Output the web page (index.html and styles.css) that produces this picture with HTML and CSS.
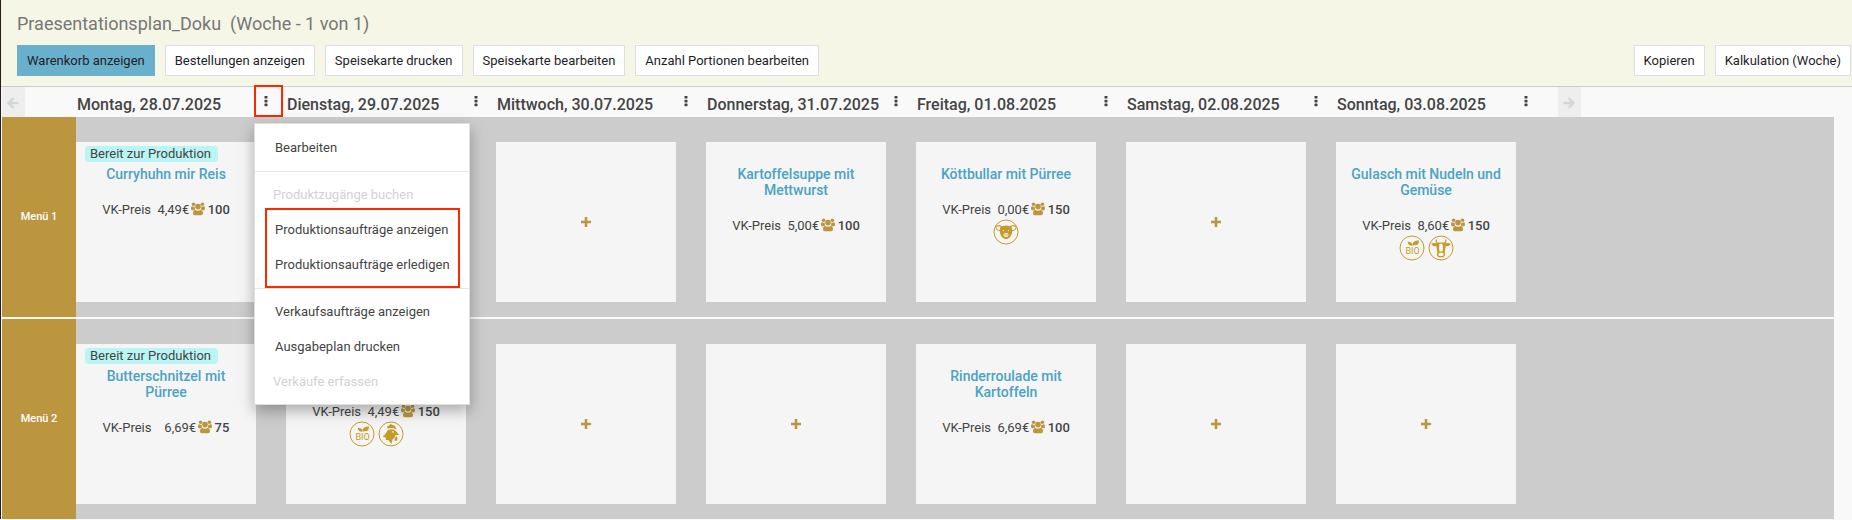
FILE: index.html
```
<!DOCTYPE html>
<html lang="de">
<head>
    <meta charset="UTF-8">
    <meta name="viewport" content="width=device-width, initial-scale=1.0">
    <title>Praesentationsplan</title>
    <link rel="stylesheet" href="styles.css">
</head>
<body>
    <svg class="sprite" aria-hidden="true">
        <symbol id="dots" viewBox="0 0 4 12">
            <rect x="0.5" y="1" width="3" height="2.6" rx="0.6"/>
            <rect x="0.5" y="4.8" width="3" height="2.6" rx="0.6"/>
            <rect x="0.5" y="8.6" width="3" height="2.6" rx="0.6"/>
        </symbol>
        <symbol id="plus" viewBox="0 0 10 10">
            <path d="M3.7 0h2.600v3.700H10v2.600H6.300V10H3.700V6.300H0V3.700h3.700z"/>
        </symbol>
        <symbol id="arrow-left" viewBox="0 0 12 12">
            <path d="M6.500 1 1.500 6l5 5M1.800 6H11.500" fill="none" stroke="currentColor" stroke-width="2.400"/>
        </symbol>
        <symbol id="arrow-right" viewBox="0 0 12 12">
            <path d="M5.500 1 10.500 6l-5 5M10.200 6H.5" fill="none" stroke="currentColor" stroke-width="2.400"/>
        </symbol>
        <symbol id="users" viewBox="0 0 14 14">
            <circle cx="2.6" cy="2.2" r="1.8"/>
            <circle cx="11.4" cy="2.2" r="1.8"/>
            <circle cx="7" cy="4.6" r="2.8"/>
            <path d="M0 6.2C0 4.6.6 4.2 1.4 4.2c1 .6 1.6.6 2.3.3 0 1.400.2 2.200.7 2.900C3.500 7.500 2.900 7.800 2.500 8.200H1.400C.5 8.200 0 7.600 0 6.200z"/>
            <path d="M14 6.200C14 4.600 13.400 4.200 12.600 4.200c-1 .6-1.600.6-2.300.3 0 1.400-.2 2.200-.7 2.900.9.1 1.500.4 1.900.8h1.100C13.500 8.200 14 7.600 14 6.200z"/>
            <path d="M2 11.300C2 9.300 2.800 7.900 4.300 7.900c1.600 1.100 3.800 1.100 5.400 0 1.500 0 2.300 1.400 2.300 3.400 0 1.200-.7 1.900-1.900 1.900H3.900C2.700 13.200 2 12.500 2 11.300z"/>
        </symbol>
        <symbol id="bio" viewBox="0 0 26 26">
            <circle cx="13" cy="13" r="12" fill="none" stroke="currentColor"/>
            <text class="bio-text" x="13.500" y="19" text-anchor="middle">BIO</text>
            <path d="M13.500 10.600C13 7.500 15.500 5.300 20 5.400c.1 3.700-2.200 5.700-5.200 4.700l-.8.900z"/>
            <path d="M13 10.600C10.800 10.800 9 9.500 8.600 6.700c2.800-.2 4.500 1 4.700 3.200z"/>
        </symbol>
        <symbol id="cow" viewBox="0 0 26 26">
            <circle cx="13" cy="13" r="12" fill="none" stroke="currentColor"/>
            <path d="M8.600 4.400C7.500 6.600 8.200 7.800 10 8.100h6c1.800-.3 2.500-1.500 1.400-3.700" fill="none" stroke="currentColor" stroke-width="1.200"/>
            <path d="M3.300 8.600C5 7.600 7.300 7.700 9 8.600L8.500 11C6 11.700 4 10.800 3.300 8.600z"/>
            <path d="M22.700 8.600C21 7.600 18.700 7.700 17 8.600l.5 2.400c2.500.7 4.500-.2 5.200-2.400z"/>
            <path d="M8.300 8h3.200l-.5 5.500.6 3.800-2.200 1.500C9.600 15.500 7.800 12.500 8.300 8z"/>
            <path d="M17.700 8h-3.200l.5 5.500-.6 3.800 2.200 1.500c-.2-3.300 1.600-6.300 1.100-10.800z"/>
            <path d="M10.400 17.200h5.200l.9 2.400-1.300 2h-4.400l-1.300-2z" fill="none" stroke="currentColor" stroke-width="1.300"/>
        </symbol>
        <symbol id="pig" viewBox="0 0 26 26">
            <circle cx="13" cy="13" r="12" fill="none" stroke="currentColor"/>
            <path d="M7.300 8.500C9.500 5.800 16.500 5.800 18.700 8.500c.8 2.200.7 5-.3 7.200-1.400 2.900-3 4.300-5.400 4.300s-4-1.400-5.400-4.300c-1-2.200-1.100-5-.3-7.200z"/>
            <path d="M8.600 7.500C6.300 6.300 4 6.600 2.800 8c.6 2.600 1.800 3.900 4.800 3.600z" fill="none" stroke="currentColor" stroke-width="1.100"/>
            <path d="M17.400 7.500c2.300-1.200 4.600-.9 5.800.5-.6 2.600-1.800 3.900-4.800 3.600z" fill="none" stroke="currentColor" stroke-width="1.100"/>
            <ellipse class="cutout" cx="13" cy="16" rx="2.600" ry="2.100"/>
            <circle cx="12" cy="16" r="0.700"/>
            <circle cx="14" cy="16" r="0.700"/>
            <circle class="cutout" cx="10.500" cy="11.600" r="0.600"/>
            <circle class="cutout" cx="15.500" cy="11.600" r="0.600"/>
        </symbol>
        <symbol id="chicken" viewBox="0 0 26 26">
            <circle cx="13" cy="13" r="12" fill="none" stroke="currentColor"/>
            <path d="M9.400 7.600C8.600 6 9.400 4.500 11 4.700c.5-1.700 3-1.900 3.700-.5 1.700-.3 3 .9 2.700 2.400.9.400 1.200 1.100.8 2-2.700-1.600-5.700-1.900-8.800-1z"/>
            <path d="M10 9c3-1.300 6.800-.8 8.200 1.500l3 3.400-3.500.2c-.5 2.200-1.600 3.400-3 4.200l-1.400 4.700-2.800-3.700-2.800-.3.300-2.300-3.400-1.400C7.600 13.700 8.500 11 10 9z"/>
            <path d="M18.300 15c1.700 1.700 1.500 4.700-.3 4.900-1.500.1-2-1.800-.9-3z"/>
            <circle class="cutout" cx="15" cy="10.900" r="0.800"/>
        </symbol>
    </svg>

    <header class="top">
        <h1>Praesentationsplan_Doku&nbsp; (Woche - 1 von 1)</h1>
        <div class="toolbar">
            <button class="btn btn-active">Warenkorb anzeigen</button>
            <button class="btn">Bestellungen anzeigen</button>
            <button class="btn">Speisekarte drucken</button>
            <button class="btn">Speisekarte bearbeiten</button>
            <button class="btn">Anzahl Portionen bearbeiten</button>
            <button class="btn push">Kopieren</button>
            <button class="btn">Kalkulation (Woche)</button>
        </div>
    </header>

    <main>
        <table class="plan">
            <colgroup>
                <col class="col-menu">
                <col class="col-day" span="7">
                <col>
            </colgroup>
            <thead>
                <tr>
                    <td><button class="week" aria-label="Vorherige Woche" disabled><svg><use href="#arrow-left"/></svg></button></td>
                    <th scope="col">
                        <div class="day">Montag, 28.07.2025
                            <button class="more marked" aria-label="Menü Montag"><svg><use href="#dots"/></svg></button>
                            <div class="menu">
                                <button>Bearbeiten</button>
                                <hr>
                                <button disabled>Produktzugänge buchen</button>
                                <div class="group marked">
                                    <button>Produktionsaufträge anzeigen</button>
                                    <button>Produktionsaufträge erledigen</button>
                                </div>
                                <hr>
                                <button>Verkaufsaufträge anzeigen</button>
                                <button>Ausgabeplan drucken</button>
                                <button disabled>Verkäufe erfassen</button>
                            </div>
                        </div>
                    </th>
                    <th scope="col"><div class="day">Dienstag, 29.07.2025 <button class="more" aria-label="Menü Dienstag"><svg><use href="#dots"/></svg></button></div></th>
                    <th scope="col"><div class="day">Mittwoch, 30.07.2025 <button class="more" aria-label="Menü Mittwoch"><svg><use href="#dots"/></svg></button></div></th>
                    <th scope="col"><div class="day">Donnerstag, 31.07.2025 <button class="more" aria-label="Menü Donnerstag"><svg><use href="#dots"/></svg></button></div></th>
                    <th scope="col"><div class="day">Freitag, 01.08.2025 <button class="more" aria-label="Menü Freitag"><svg><use href="#dots"/></svg></button></div></th>
                    <th scope="col"><div class="day">Samstag, 02.08.2025 <button class="more" aria-label="Menü Samstag"><svg><use href="#dots"/></svg></button></div></th>
                    <th scope="col"><div class="day">Sonntag, 03.08.2025 <button class="more" aria-label="Menü Sonntag"><svg><use href="#dots"/></svg></button></div></th>
                    <td class="next"><button class="week" aria-label="Nächste Woche" disabled><svg><use href="#arrow-right"/></svg></button></td>
                </tr>
            </thead>
            <tbody>
                <tr>
                    <th scope="row">Menü 1</th>
                    <td>
                        <div class="card">
                            <div class="status"><span>Bereit zur Produktion</span></div>
                            <a href="#">Curryhuhn mir Reis</a>
                            <p>VK-Preis&nbsp; 4,49€ <svg class="users"><use href="#users"/></svg> <b>100</b></p>
                        </div>
                    </td>
                    <td>
                        <div class="card"></div>
                    </td>
                    <td><div class="card empty"><button aria-label="Hinzufügen"><svg><use href="#plus"/></svg></button></div></td>
                    <td>
                        <div class="card">
                            <div class="status"></div>
                            <a href="#">Kartoffelsuppe mit Mettwurst</a>
                            <p>VK-Preis&nbsp; 5,00€ <svg class="users"><use href="#users"/></svg> <b>100</b></p>
                        </div>
                    </td>
                    <td>
                        <div class="card">
                            <div class="status"></div>
                            <a href="#">Köttbullar mit Pürree</a>
                            <p>VK-Preis&nbsp; 0,00€ <svg class="users"><use href="#users"/></svg> <b>150</b></p>
                            <div class="tags"><svg><use href="#pig"/></svg></div>
                        </div>
                    </td>
                    <td><div class="card empty"><button aria-label="Hinzufügen"><svg><use href="#plus"/></svg></button></div></td>
                    <td>
                        <div class="card">
                            <div class="status"></div>
                            <a href="#">Gulasch mit Nudeln und Gemüse</a>
                            <p>VK-Preis&nbsp; 8,60€ <svg class="users"><use href="#users"/></svg> <b>150</b></p>
                            <div class="tags"><svg><use href="#bio"/></svg><svg><use href="#cow"/></svg></div>
                        </div>
                    </td>
                    <td></td>
                </tr>
                <tr>
                    <th scope="row">Menü 2</th>
                    <td>
                        <div class="card">
                            <div class="status"><span>Bereit zur Produktion</span></div>
                            <a href="#">Butterschnitzel mit Pürree</a>
                            <p>VK-Preis&nbsp;&nbsp;&nbsp; 6,69€ <svg class="users"><use href="#users"/></svg> <b>75</b></p>
                        </div>
                    </td>
                    <td>
                        <div class="card">
                            <div class="status"></div>
                            <a href="#"></a>
                            <p>VK-Preis&nbsp; 4,49€ <svg class="users"><use href="#users"/></svg> <b>150</b></p>
                            <div class="tags"><svg><use href="#bio"/></svg><svg><use href="#chicken"/></svg></div>
                        </div>
                    </td>
                    <td><div class="card empty"><button aria-label="Hinzufügen"><svg><use href="#plus"/></svg></button></div></td>
                    <td><div class="card empty"><button aria-label="Hinzufügen"><svg><use href="#plus"/></svg></button></div></td>
                    <td>
                        <div class="card">
                            <div class="status"></div>
                            <a href="#">Rinderroulade mit Kartoffeln</a>
                            <p>VK-Preis&nbsp; 6,69€ <svg class="users"><use href="#users"/></svg> <b>100</b></p>
                        </div>
                    </td>
                    <td><div class="card empty"><button aria-label="Hinzufügen"><svg><use href="#plus"/></svg></button></div></td>
                    <td><div class="card empty"><button aria-label="Hinzufügen"><svg><use href="#plus"/></svg></button></div></td>
                    <td></td>
                </tr>
            </tbody>
        </table>
    </main>
</body>
</html>
```
FILE: styles.css
```
* {
    box-sizing: border-box;
}
body {
    margin: 0;
    border-left: 1px solid #2b1d1a;
    background: #f9f9f9;
    color: #444;
    font-family: Roboto, Arial, sans-serif;
    font-size: 13px;
}
button {
    font: inherit;
    color: inherit;
    background: none;
    border: 0;
    padding: 0;
    cursor: pointer;
}
svg {
    fill: currentColor;
}
.sprite {
    display: none;
}

/* top bar */
.top {
    padding: 12px 1px 10px 16px;
    background: #f6f6e6;
    border-bottom: 1px solid #ccc;
}
.top h1 {
    margin: 0 0 9px;
    font-size: 18px;
    font-weight: 400;
    line-height: 24px;
    color: #777;
}
.toolbar {
    display: flex;
    gap: 10px;
}
.btn {
    height: 31px;
    padding: 0 9px;
    background: #fff;
    border: 1px solid #dcdfe6;
    color: #1e1e28;
    white-space: nowrap;
}
.btn-active {
    background: #69b0cd;
    border-color: #69b0cd;
    color: #222;
}
.push {
    margin-left: auto;
}

/* plan */
main {
    padding: 0 18px 0 1px;
}
.plan {
    width: 100%;
    table-layout: fixed;
    border-collapse: collapse;
}
.plan td, .plan th {
    padding: 0;
    vertical-align: top;
}
.col-menu {
    width: 74px;
}
.col-day {
    width: 210px;
}
.day {
    position: relative;
    display: flex;
    justify-content: space-between;
    height: 30px;
    padding: 0 9px 0 1px;
    font-size: 16px;
    font-weight: 500;
    line-height: 35px;
    white-space: nowrap;
}
.more {
    width: 23px;
    height: 28px;
    line-height: 0;
}
.more svg {
    width: 4px;
    height: 12px;
}
.week {
    display: block;
    width: 23px;
    height: 30px;
    padding: 2px 2px 0 0;
    background: #eee;
    color: #d5d5d5;
    line-height: 0;
}
.week svg {
    width: 12px;
    height: 12px;
}
.plan .next {
    padding-left: 12px;
}
tbody tr {
    background: #ccc;
}
tbody tr + tr {
    border-top: 2px solid #f9f9f9;
}
.plan tbody th {
    padding-bottom: 2px;
    background: #bc953f;
    color: #fff;
    font-size: 11px;
    font-weight: 500;
    vertical-align: middle;
}
.plan tbody td {
    padding: 25px 30px 15px 0;
}
.card {
    height: 160px;
    padding: 4px 9px;
    background: #f5f5f5;
    text-align: center;
}
.status {
    display: flex;
    height: 20px;
}
.status span {
    height: 16px;
    padding: 0 7px 0 5px;
    border-radius: 4px;
    background: #b9f5f3;
    line-height: 16px;
}
.card a {
    display: block;
    min-height: 16px;
    padding: 0 4px;
    color: #4aa3c3;
    font-size: 14px;
    font-weight: 500;
    line-height: 16px;
    text-decoration: none;
}
.card p {
    margin: 20px 0 0;
    line-height: 16px;
    white-space: nowrap;
}
.card b {
    font-weight: 500;
}
.users {
    width: 14px;
    height: 14px;
    margin: 0 -1px;
    color: #bc953f;
    vertical-align: -2px;
}
.tags {
    display: flex;
    justify-content: center;
    gap: 3px;
    padding-top: 1px;
    color: #c49a2a;
}
.tags svg {
    width: 26px;
    height: 26px;
}
.cutout {
    fill: #f5f5f5;
}
.bio-text {
    font-size: 9px;
}
.empty {
    display: grid;
    place-items: center;
}
.empty button {
    color: #bc953f;
    line-height: 0;
}
.empty svg {
    width: 10px;
    height: 10px;
}

/* dropdown of a day */
.menu {
    position: absolute;
    top: 36px;
    left: 178px;
    z-index: 1;
    width: 216px;
    padding: 6px 0 5px;
    background: #fff;
    border: 1px solid #dcdfe6;
    box-shadow: 0 6px 14px rgba(0, 0, 0, 0.3);
    font-size: 13px;
    font-weight: 400;
    line-height: 35px;
}
.menu button {
    display: block;
    width: 100%;
    height: 35px;
    padding-left: 20px;
    text-align: left;
}
.menu button:disabled {
    padding-left: 18px;
    color: #d2d2d2;
}
.menu hr {
    height: 1px;
    margin: 6px 0 5px;
    border: 0;
    background: #e6e6ea;
}
.marked {
    position: relative;
}
.marked::after {
    content: "";
    position: absolute;
    inset: -2px -6px -2px 0;
    border: 2px solid #ff2600;
    pointer-events: none;
}
.group::after {
    inset: -4px 9px -6px 10px;
}
```
